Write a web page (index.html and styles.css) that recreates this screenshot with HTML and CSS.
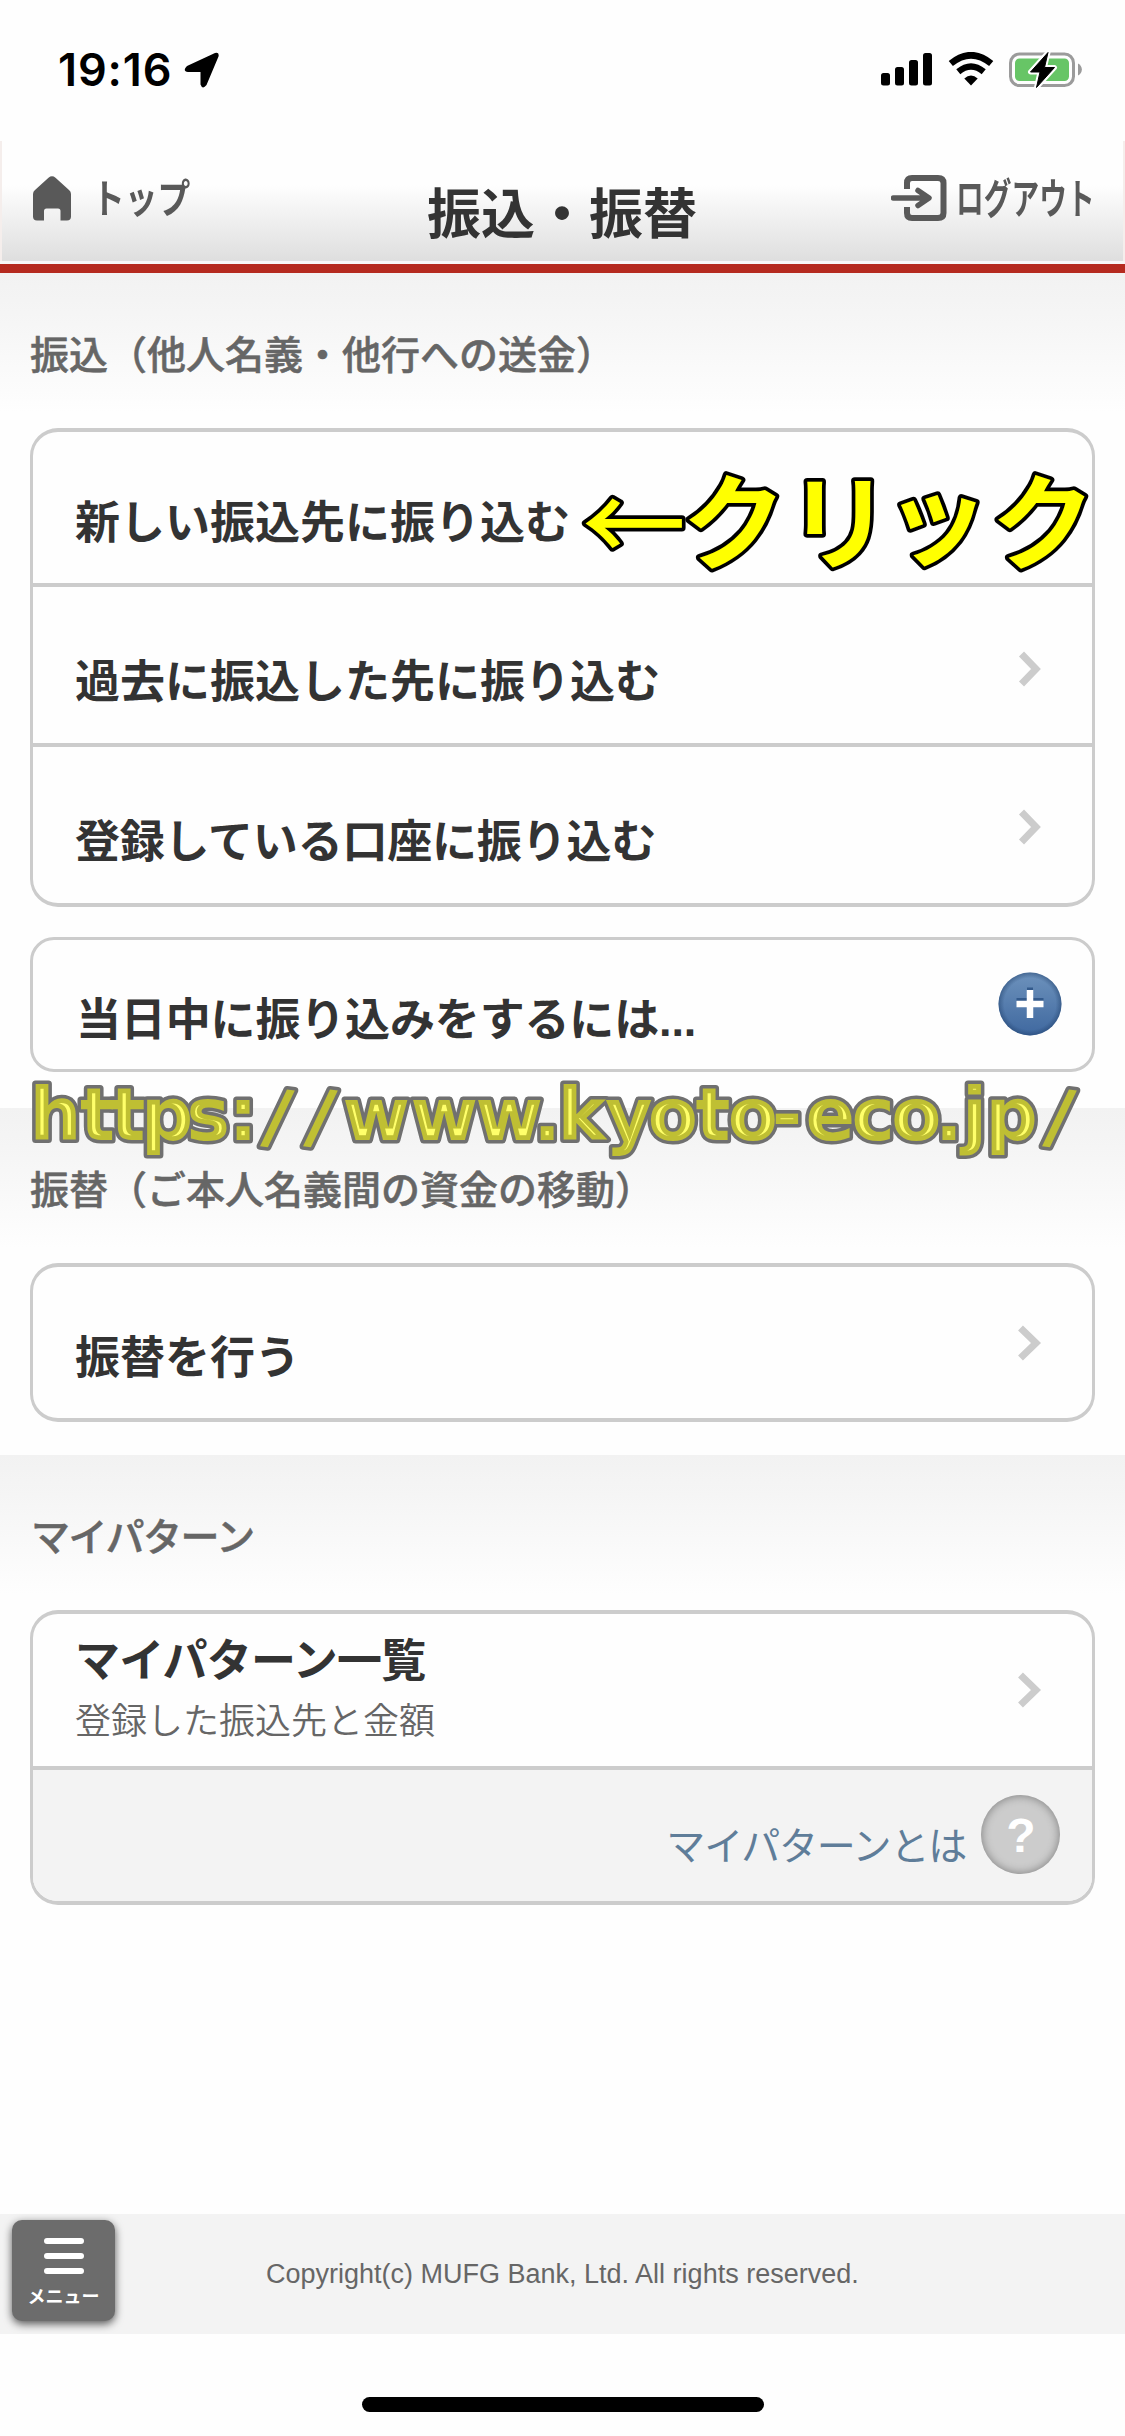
FILE: index.html
```html
<!DOCTYPE html>
<html lang="ja">
<head>
<meta charset="utf-8">
<title>振込・振替</title>
<link rel="stylesheet" href="styles.css">
</head>
<body>
<div class="status">
  <span class="clock">19:16</span>
  <svg class="locate" width="36" height="36" viewBox="0 0 36 36"><path d="M3 14 L31 1 Q35.500 0 34.500 4.500 L22.500 33 Q18.500 38 16.500 32.500 V20 H4 Q-2 19 3 14Z"/></svg>
  <svg class="signal" width="52" height="34" viewBox="0 0 52 34"><rect x="0" y="21" width="9" height="12.500" rx="2.500"/><rect x="14" y="15" width="9" height="18.500" rx="2.500"/><rect x="28" y="8" width="9" height="25.500" rx="2.500"/><rect x="42" y="1" width="9" height="32.500" rx="2.500"/></svg>
  <svg class="wifi" width="46" height="34" viewBox="0 0 46 34"><path d="M2.800 11.500 Q23 -5 43.200 11.500" fill="none" stroke="#000" stroke-width="6.600"/><path d="M10.300 19.700 Q23 9.300 35.700 19.700" fill="none" stroke="#000" stroke-width="6.400"/><path d="M16.300 26.500 Q23 20.500 29.700 26.500 L23 33.500Z"/></svg>
  <svg class="battery" width="74" height="38" viewBox="0 0 74 38"><rect x="1.500" y="3" width="63" height="31.500" rx="9" fill="none" stroke="#9b9b9b" stroke-width="3"/><path d="M69 12.500 a8 7 0 0 1 0 12Z" fill="#9b9b9b"/><rect x="6" y="7.500" width="54" height="22.500" rx="4.500" fill="#67c566"/><path d="M39 1.500 L21.500 21 H31 L27.500 36.500 L45.500 16.500 H35.500 Z" stroke="#fff" stroke-width="5" stroke-linejoin="round"/><path d="M39 1.500 L21.500 21 H31 L27.500 36.500 L45.500 16.500 H35.500 Z" stroke="#000" stroke-width="1" stroke-linejoin="round"/></svg>
</div>
<header class="header">
  <a class="nav home">
    <svg width="38" height="45" viewBox="0 0 38 45"><path d="M0 18 Q0 15.500 2 14 L15.500 1.700 Q19 -1.200 22.500 1.700 L36 14 Q38 15.500 38 18 V40.500 Q38 44.500 34 44.500 H27.500 V35 Q27.500 32.500 25 32.500 H13.500 Q11 32.500 11 35 V44.500 H4 Q0 44.500 0 40.500Z" fill="#595959"/></svg>
    <span class="home-label">トップ</span>
  </a>
  <h1 class="title">振込・振替</h1>
  <a class="nav logout">
    <svg width="56" height="46" viewBox="0 0 56 46" fill="none" stroke="#595959"><path d="M16 14 V8 Q16 3 21 3 H47 Q52.500 3 52.500 8 V38 Q52.500 43 47 43 H21 Q16 43 16 38 V32" stroke-width="6"/><path d="M2.500 23 H37 M27 15.500 L38 23 L27 30.500" stroke-width="5.500" stroke-linecap="round" stroke-linejoin="round"/></svg>
    <span class="logout-label">ログアウト</span>
  </a>
</header>

<section class="section transfer">
  <h2 class="heading">振込（他人名義・他行への送金）</h2>
  <div class="card">
    <a class="row first"><span class="label">新しい振込先に振り込む</span></a>
    <a class="row"><span class="label">過去に振込した先に振り込む</span><svg class="chev" width="24" height="36" viewBox="0 0 24 36"><path d="M3.500 3 L18 18 L3.500 33"/></svg></a>
    <a class="row third"><span class="label">登録している口座に振り込む</span><svg class="chev" width="24" height="36" viewBox="0 0 24 36"><path d="M3.500 3 L18 18 L3.500 33"/></svg></a>
  </div>
  <div class="card fold">
    <span class="label">当日中に振り込みをするには<span class="dots">...</span></span>
    <svg class="plus" width="64" height="64" viewBox="0 0 64 64"><defs><linearGradient id="blue" x2="0" y2="1"><stop offset="0" stop-color="#6d92bc"/><stop offset="1" stop-color="#3f689f"/></linearGradient><radialGradient id="rim"><stop offset=".82" stop-color="#20406b" stop-opacity="0"/><stop offset="1" stop-color="#20406b" stop-opacity=".5"/></radialGradient></defs><circle cx="32" cy="32" r="31.500" fill="url(#blue)"/><circle cx="32" cy="32" r="31.500" fill="url(#rim)"/><path d="M29 15.500h6v3h-6zM18.500 26h27v3h-27z" fill="#335a8c"/><path d="M18.500 32h27M32 18v28" stroke="#fff" stroke-width="6.500"/></svg>
  </div>
</section>

<section class="section swap">
  <h2 class="heading">振替（ご本人名義間の資金の移動）</h2>
  <div class="card">
    <a class="row first"><span class="label">振替を行う</span><svg class="chev" width="24" height="36" viewBox="0 0 24 36"><path d="M2.500 3 L18 18 L2.500 33"/></svg></a>
  </div>
</section>

<section class="section pattern">
  <h2 class="heading kana">マイパターン</h2>
  <div class="card">
    <a class="row first double"><span class="stack"><span class="label kana">マイパターン一覧</span><span class="sub">登録した振込先と金額</span></span><svg class="chev" width="24" height="36" viewBox="0 0 24 36"><path d="M2.500 3 L18 18 L2.500 33"/></svg></a>
    <a class="help"><span class="help-label">マイパターンとは</span><span class="question">?</span></a>
  </div>
</section>

<footer class="footer">
  <a class="menu"><i></i><i></i><i></i><span>メニュー</span></a>
  <p class="copy">Copyright(c) MUFG Bank, Ltd. All rights reserved.</p>
</footer>
<div class="home-bar"></div>

<svg class="click-note" width="555" height="200" viewBox="570 420 555 200">
  <text y="563 562 562 557 562" x="582 682 787 885 991"><tspan class="thin">←</tspan>クリック</text>
</svg>
<svg class="watermark" width="1125" height="120" viewBox="0 1060 1125 120">
  <defs>
    <text id="url" y="1139.500" x="29.600 80 110.500 141 186.400 228.500 261 304 342.500 410.500 475.500 533.200 557.500 605 647.700 695.500 727.700 771.700 805.500 851.500 891.300 935 962 985.600 1043" rotate="0 0 0 0 0 0 8 8 0 0 0 0 0 0 0 0 0 0 0 0 0 0 0 0 8">https://www.kyoto-eco.jp/</text>
    <clipPath id="url-clip"><use href="#url"/></clipPath>
  </defs>
  <use class="rim" href="#url"/>
  <g clip-path="url(#url-clip)"><use class="body" href="#url"/></g>
</svg>
</body>
</html>
```
FILE: styles.css
```css
* { box-sizing: border-box; }
body {
  margin: 0;
  width: 1125px;
  height: 2436px;
  position: relative;
  display: flex;
  flex-direction: column;
  overflow: hidden;
  background: #fefefe;
  color: #333;
  font-family: "Noto Sans CJK JP", "Liberation Sans", sans-serif;
}
h1, h2, p { margin: 0; }
svg { display: block; flex: none; }

.status {
  display: flex;
  height: 141px;
  padding: 51px 42px 0 58px;
  color: #000;
}
.clock {
  width: 126px;
  height: 36px;
  line-height: 37px;
  font-family: Inter, sans-serif;
  font-size: 45px;
  font-weight: 600;
  letter-spacing: 0.9px;
}
.locate { margin-top: 1px; }
.signal { margin-left: auto; margin-top: 1px; }
.wifi { margin: 1px 15px 0 15px; }

.header {
  display: flex;
  justify-content: space-between;
  height: 132px;
  padding: 0 30px 0 31px;
  border-style: solid;
  border-width: 0 0 9px;
  border-image: linear-gradient(#a92c22, #c6261a 55%, #b52a1f) 1;
  box-shadow: inset 0 -3px #f7f7f7, inset 2px 0 #f5eeec, inset -2px 0 #f5eeec;
  background: linear-gradient(#fefefe 36%, #dedede 98%);
}
.nav { display: flex; width: 235px; color: #595959; font-weight: 700; }
.home svg { margin: 35px 0 0 2px; }
.home-label {
  margin: 25px 0 0 21px;
  height: 60px;
  line-height: 60px;
  font-size: 40px;
  transform: scaleX(.82);
  transform-origin: 0 0;
  white-space: nowrap;
}
.title {
  margin-top: 30px;
  margin-left: -2px;
  line-height: 80px;
  font-size: 54px;
  font-weight: 700;
}
.logout svg { margin: 34px 0 0 31px; }
.logout-label {
  margin: 25px 0 0 9px;
  height: 60px;
  line-height: 60px;
  font-size: 42px;
  transform: scaleX(.66);
  transform-origin: 0 0;
  white-space: nowrap;
}

.section {
  padding: 0 30px;
  background: linear-gradient(#f2f2f2, #f5f5f5 40px, #fefefe 140px);
}
.transfer { height: 835px; }
.swap { height: 347px; }
.pattern { height: 759px; }
.heading {
  height: 155px;
  padding-top: 49px;
  line-height: 60px;
  font-size: 39px;
  font-weight: 500;
  color: #666;
  -webkit-text-stroke: 0.5px #666;
}
.heading.kana { padding-left: 1px; letter-spacing: -1.4px; }
.card {
  border: 4px solid #ccc;
  border-width: 4px 3px;
  border-radius: 28px;
  background: #fefefe;
  overflow: hidden;
}
.row {
  display: flex;
  justify-content: space-between;
  height: 160px;
  padding: 62px 50px 0 42px;
  border-top: 4px solid #ccc;
}
.row.first { height: 151px; padding-top: 58px; border-top: 0; }
.label {
  line-height: 60px;
  font-size: 45px;
  font-weight: 700;
  white-space: nowrap;
}
.third .label { letter-spacing: -0.2px; }
.chev { margin-top: 2px; }
.third .chev { margin-top: 0; }
.first .chev { margin-top: 0; }
.chev path { fill: none; stroke: #ccc; stroke-width: 7px; }
.fold {
  display: flex;
  justify-content: space-between;
  height: 135px;
  margin-top: 30px;
  padding: 47px 30px 0 43px;
  border-width: 3px;
  border-radius: 24px;
}
.fold .label { letter-spacing: -0.15px; }
.plus { margin-top: -15px; }
.dots { font-family: "Liberation Sans", sans-serif; }

.row.double { height: 152px; padding-top: 14px; }
.stack { display: flex; flex-direction: column; }
.double .label { height: 60px; letter-spacing: -0.8px; }
.sub { line-height: 60px; font-size: 36px; color: #666; font-weight: 350; }
.double .chev { margin-top: 44px; }
.help {
  display: flex;
  justify-content: flex-end;
  height: 135px;
  padding: 25px 32px 0 0;
  border-top: 4px solid #ccc;
  background: #f3f3f3;
  color: #5f7d99;
}
.help-label {
  margin: 18px 15px 0 0;
  height: 60px;
  line-height: 60px;
  font-size: 39px;
  letter-spacing: -1.2px;
}
.question {
  width: 79px;
  height: 79px;
  border-radius: 50%;
  background: #ccc;
  box-shadow: inset 0 0 8px 1px #888;
  color: #fff;
  font: 700 48px/82px "Liberation Sans", sans-serif;
  text-align: center;
  text-indent: 1px;
}

.footer {
  display: flex;
  height: 120px;
  padding: 6px 0 0 12px;
  background: #f3f3f3;
}
.menu {
  display: flex;
  flex-direction: column;
  align-items: center;
  gap: 9px;
  width: 103px;
  height: 101px;
  padding-top: 18px;
  border-radius: 10px;
  background: #6c6c6c;
  box-shadow: 0 3px 9px rgba(0, 0, 0, .65);
}
.menu i { width: 40px; height: 6px; border-radius: 3px; background: #fff; }
.menu span {
  line-height: 24px;
  font-size: 18px;
  font-weight: 700;
  color: #fff;
  white-space: nowrap;
}
.copy {
  margin: 38px 0 0 151px;
  font: 27px/32px "Liberation Sans", sans-serif;
  color: #666;
  white-space: nowrap;
}
.home-bar {
  width: 402px;
  height: 15px;
  margin: 63px auto 0;
  border-radius: 8px;
  background: #000;
}

/* annotations lying over the page */
.click-note {
  position: absolute;
  left: 570px;
  top: 420px;
  overflow: visible;
}
.click-note text {
  font: 700 104px "Noto Sans CJK JP", sans-serif;
  fill: #ff0;
  stroke: #000;
  stroke-width: 7.5px;
  stroke-linejoin: round;
  paint-order: stroke fill;
}
.click-note .thin { font-weight: 500; }
.watermark {
  position: absolute;
  left: 0;
  top: 1060px;
  overflow: visible;
  font: 700 73px "DejaVu Sans", sans-serif;
}
.watermark .rim {
  fill: #707070;
  stroke: #707070;
  stroke-width: 7px;
  stroke-linejoin: round;
}
.watermark .body {
  fill: #ffff6a;
  stroke: #bfbf33;
  stroke-width: 9.5px;
}
```
